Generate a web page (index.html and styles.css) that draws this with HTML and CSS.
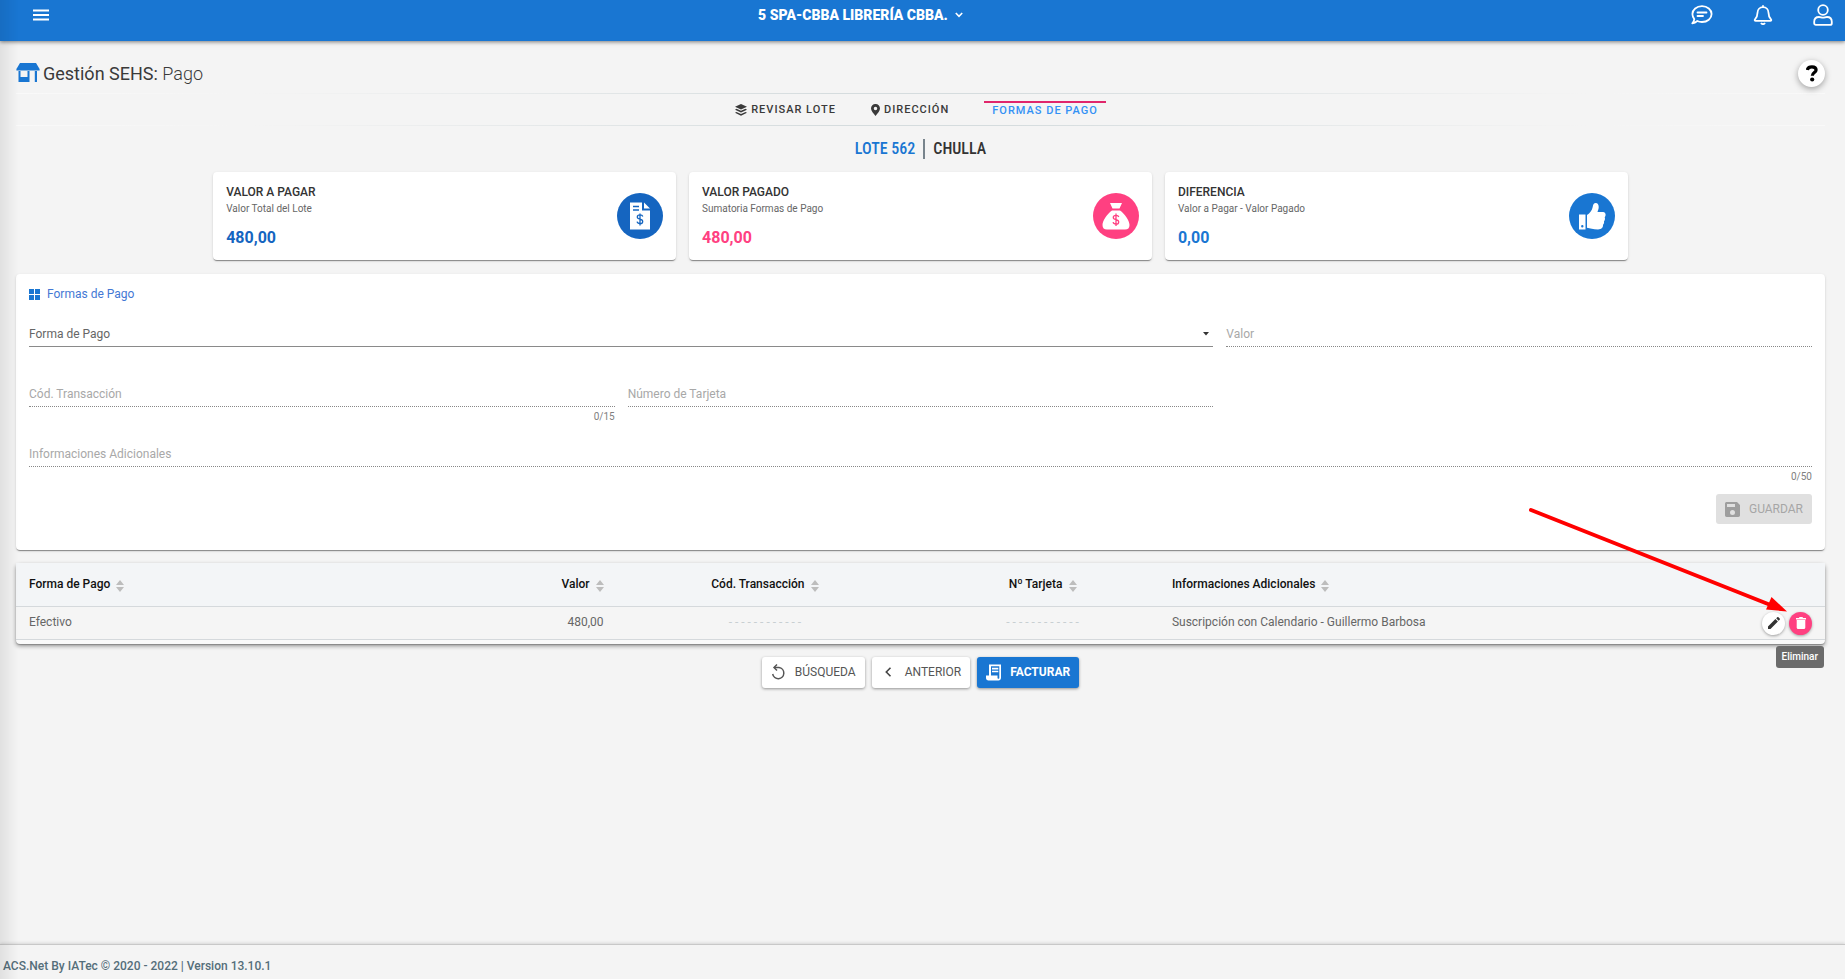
FILE: index.html
```html
<!DOCTYPE html>
<html lang="es">
<head>
<meta charset="utf-8">
<meta name="viewport" content="width=device-width, initial-scale=1">
<title>Gestión SEHS: Pago</title>
<link rel="stylesheet" href="styles.css">
</head>
<body>
<header class="topbar">
  <div class="topbar-side topbar-menu">
    <button class="icon-button" type="button" aria-label="Menú">
      <svg width="16" height="12" viewBox="0 0 16 12" fill="#fff"><path d="M0 .500h16v2H0zM0 5h16v2H0zM0 9.500h16v2H0z"/></svg>
    </button>
  </div>
  <button class="entity" type="button">5 SPA-CBBA LIBRERÍA CBBA.
    <svg width="8" height="6" viewBox="0 0 8 6" fill="none" stroke="#fff" stroke-width="1.600"><path d="M.8 1 4 4.400 7.200 1"/></svg>
  </button>
  <div class="topbar-side topbar-actions">
    <button class="icon-button" type="button" aria-label="Mensajes">
      <svg width="22" height="20" viewBox="0 0 22 20" fill="none" stroke="#fff" stroke-width="1.800" stroke-linecap="round" stroke-linejoin="round"><path d="M11 1.200c5.400 0 9.600 3.500 9.600 7.900S16.400 17 11 17c-1.700 0-3.300-.3-4.700-1-1.500 1.200-3.100 2-5 2.300 1.100-1.100 1.800-2.500 2-4.200C2 12.700 1.400 11 1.400 9.100c0-4.400 4.200-7.900 9.600-7.900z"/><path d="M6.500 7.500h9M6.500 11h5.500"/></svg>
    </button>
    <button class="icon-button" type="button" aria-label="Notificaciones">
      <svg width="20" height="20" viewBox="0 0 20 20" fill="none" stroke="#fff" stroke-width="1.800" stroke-linejoin="round"><path d="M10 .3v2M10 2.200c-3.300 0-5.500 2.400-5.500 5.600 0 3.600-1 5-2.500 6.500-.6.700-.3 1.500.7 1.500h14.600c1 0 1.300-.8.7-1.500-1.500-1.500-2.500-2.900-2.500-6.500 0-3.200-2.200-5.600-5.500-5.600z"/><path d="M8 18c.8 1.500 3.200 1.500 4 0"/></svg>
    </button>
    <button class="icon-button" type="button" aria-label="Usuario">
      <svg width="20" height="22" viewBox="0 0 20 22" fill="none" stroke="#fff" stroke-width="1.800"><circle cx="10" cy="6" r="4.800"/><path d="M6 13c1.500 0 2.500.7 4 .7s2.500-.7 4-.7c3 0 4.800 2 4.800 4.800v1.400c0 1-.7 1.700-1.700 1.700H2.900c-1 0-1.700-.7-1.700-1.700v-1.400C1.200 15 3 13 6 13z"/></svg>
    </button>
  </div>
</header>

<main class="page">
  <div class="page-head">
    <svg width="24" height="20" viewBox="0 0 24 20" fill="#1976d2"><path d="M4 0h16l3.600 6v1.600H.4V6z"/><path d="M2.500 8h2v6h7V8h2v11h-11zM18.800 8h2.200v11h-2.200z"/></svg>
    <h1 class="page-title">Gestión SEHS: <span class="page-sub">Pago</span></h1>
    <button class="help" type="button" aria-label="Ayuda">
      <svg width="12" height="17" viewBox="0 0 12 17" fill="none" stroke="#000" stroke-width="3.200"><path d="M1.300 5C1.700 2.700 3.500 1.800 5.900 1.800c2.600 0 4.200 1.200 4.200 3.100 0 2.700-3.800 2.600-3.800 5.900" stroke-linejoin="round"/><circle cx="6.200" cy="14.500" r="2.100" fill="#000" stroke="none"/></svg>
    </button>
  </div>
  <nav class="steps">
    <a class="step" href="#revisar">
      <svg width="12" height="12" viewBox="0 0 12 12" fill="#3a3a3a"><path d="M6 0 12 2.700 6 5.400 0 2.700zM1.500 4.800 6 6.800l4.500-2L12 5.700 6 8.400 0 5.700zM1.500 7.900 6 9.900l4.500-2 1.500.9-6 2.900-6-2.900z"/></svg>
      REVISAR LOTE</a>
    <a class="step" href="#direccion">
      <svg width="9" height="12" viewBox="0 0 9 12" fill="#3a3a3a" fill-rule="evenodd"><path d="M4.500 0A4.400 4.400 0 0 1 9 4.400C9 7 6.500 9 4.500 12 2.500 9 0 7 0 4.400A4.400 4.400 0 0 1 4.500 0zm0 2.700a1.700 1.700 0 1 0 0 3.500 1.700 1.700 0 0 0 0-3.500z"/></svg>
      DIRECCIÓN</a>
    <a class="step step-active" href="#pago" aria-current="step">FORMAS DE PAGO</a>
  </nav>
  <h2 class="lot"><span class="lot-number">LOTE 562</span><span class="lot-name">CHULLA</span></h2>

  <section class="cards">
    <article class="card">
      <div>
        <h3 class="card-title">VALOR A PAGAR</h3>
        <p class="card-note">Valor Total del Lote</p>
        <p class="card-value navy">480,00</p>
      </div>
      <svg class="badge" viewBox="0 0 46 46"><circle cx="23" cy="23" r="23" fill="#1565c0"/><path fill="#fff" d="M13 9.500h12v8h8v19H13z"/><path fill="#fff" d="M27 9.500l6 6h-6z"/><path d="M16 13.500h6M16 17h6" stroke="#1565c0" stroke-width="1.500"/><path d="M25.800 23.500c-.3-1-1.400-1.600-2.800-1.600-1.600 0-2.700.8-2.700 2.100 0 3 5.400 1.400 5.400 4.400 0 1.300-1.200 2.200-2.700 2.200s-2.700-.7-2.900-1.900M23 20.400v12" fill="none" stroke="#1565c0" stroke-width="1.300"/></svg>
    </article>
    <article class="card">
      <div>
        <h3 class="card-title">VALOR PAGADO</h3>
        <p class="card-note">Sumatoria Formas de Pago</p>
        <p class="card-value pink">480,00</p>
      </div>
      <svg class="badge" viewBox="0 0 46 46"><circle cx="23" cy="23" r="23" fill="#ff4081"/><path fill="#fff" d="M17 10h12l-2.500 5.500h-7zM19 17.500h8c4.500 3 9.500 10 9.500 14.500 0 3-1.500 4.500-4.500 4.500H14c-3 0-4.500-1.500-4.500-4.500 0-4.500 5-11.500 9.500-14.500z"/><path d="M25.800 24c-.3-1-1.400-1.600-2.800-1.600-1.600 0-2.700.8-2.700 2.100 0 3 5.400 1.400 5.400 4.400 0 1.300-1.200 2.200-2.700 2.200s-2.700-.7-2.900-1.900M23 20.500v12.500" fill="none" stroke="#ff4081" stroke-width="1.300"/></svg>
    </article>
    <article class="card">
      <div>
        <h3 class="card-title">DIFERENCIA</h3>
        <p class="card-note">Valor a Pagar - Valor Pagado</p>
        <p class="card-value blue">0,00</p>
      </div>
      <svg class="badge" viewBox="0 0 46 46"><circle cx="23" cy="23" r="23" fill="#1976d2"/><path fill="#fff" fill-rule="evenodd" d="M10 21.500h6.500v15H10zm3.300 10.600a1.200 1.200 0 1 0 0 2.400 1.200 1.200 0 0 0 0-2.400z"/><path fill="#fff" d="M18 22c3-2 5-4.500 5.700-8 .4-2.500 1.200-4 3-4 2.200 0 3 2 3 4 0 2-.8 3.500-1.200 5h5.500c1.800 0 2.800 1.500 2.600 3-.1 1-.4 1.600-.9 2.200.6 1.500.2 3-.7 4 .3 1.400-.1 2.700-1 3.600.2 2.700-1.500 4.700-5 4.700-5 0-8-1.500-11-1.800z"/></svg>
    </article>
  </section>

  <form class="panel">
    <h2 class="panel-title">
      <svg width="11" height="11" viewBox="0 0 11 11" fill="#1976d2"><path d="M0 0h5v5H0zM6 0h5v5H6zM0 6h5v5H0zM6 6h5v5H6z"/></svg>
      Formas de Pago</h2>
    <div class="fields">
      <div class="field span-2 enabled">
        <label for="forma">Forma de Pago</label>
        <select id="forma"><option value=""></option><option value="e">Efectivo</option></select>
        <svg class="caret" width="6" height="4" viewBox="0 0 6 4"><path d="M0 0h6L3 3.500z"/></svg>
      </div>
      <div class="field"><label for="valor">Valor</label><input id="valor" type="text" disabled></div>
      <div class="field"><label for="cod">Cód. Transacción</label><input id="cod" type="text" maxlength="15" disabled><span class="count">0/15</span></div>
      <div class="field"><label for="tarjeta">Número de Tarjeta</label><input id="tarjeta" type="text" disabled></div>
      <div class="field span-3"><label for="info">Informaciones Adicionales</label><input id="info" type="text" maxlength="50" disabled><span class="count">0/50</span></div>
    </div>
    <div class="panel-actions">
      <button class="btn btn-disabled" type="button" disabled>
        <svg width="15" height="15" viewBox="0 0 15 15" fill="#9e9e9e" fill-rule="evenodd"><path d="M1.700 0H12l3 3v10.300c0 1-.7 1.700-1.700 1.700H1.700C.7 15 0 14.300 0 13.300V1.700C0 .7.700 0 1.700 0zM2 2v3h8V2zm5.500 6a2.500 2.500 0 1 0 0 5 2.500 2.500 0 0 0 0-5z"/></svg>
        GUARDAR</button>
    </div>
  </form>

  <div class="table-box">
    <table class="payments">
      <colgroup><col class="c-form"><col class="c-value"><col class="c-code"><col class="c-card"><col class="c-info"><col class="c-act"></colgroup>
      <thead>
        <tr>
          <th scope="col">Forma de Pago<svg class="sort" viewBox="0 0 8 12"><path d="M4 0l4 5H0zM0 7h8l-4 5z"/></svg></th>
          <th scope="col" class="right">Valor<svg class="sort" viewBox="0 0 8 12"><path d="M4 0l4 5H0zM0 7h8l-4 5z"/></svg></th>
          <th scope="col" class="center">Cód. Transacción<svg class="sort" viewBox="0 0 8 12"><path d="M4 0l4 5H0zM0 7h8l-4 5z"/></svg></th>
          <th scope="col" class="center">Nº Tarjeta<svg class="sort" viewBox="0 0 8 12"><path d="M4 0l4 5H0zM0 7h8l-4 5z"/></svg></th>
          <th scope="col" class="flush">Informaciones Adicionales<svg class="sort" viewBox="0 0 8 12"><path d="M4 0l4 5H0zM0 7h8l-4 5z"/></svg></th>
          <th></th>
        </tr>
      </thead>
      <tbody>
        <tr>
          <td>Efectivo</td>
          <td class="right">480,00</td>
          <td class="center empty">- - - - - - - - - - - -</td>
          <td class="center empty">- - - - - - - - - - - -</td>
          <td class="flush">Suscripción con Calendario - Guillermo Barbosa</td>
          <td class="right">
            <div class="row-actions">
              <button class="round" type="button" aria-label="Editar"><svg width="12" height="12" viewBox="0 0 12 12" fill="#333"><path d="M0 12v-2.500L7.400 2.100l2.500 2.500L2.500 12zM8.200 1.300 9.300.3c.3-.3.800-.3 1.100 0l1.300 1.300c.3.300.3.800 0 1.100l-1.100 1.100z"/></svg></button>
              <button class="round round-pink" type="button" aria-describedby="tip" aria-label="Eliminar"><svg width="10" height="12" viewBox="0 0 10 12" fill="#fff"><path d="M0 1h2.800l.8-1h2.800l.8 1H10v1.500H0zM.7 3h8.600v7.500c0 .9-.6 1.500-1.500 1.500H2.200C1.300 12 .7 11.400.7 10.500z"/></svg></button>
              <span class="tooltip" id="tip" role="tooltip">Eliminar</span>
              <svg class="pointer" width="260" height="106" viewBox="0 0 260 106"><path d="M3 3 240 97" stroke="#f00" stroke-width="4" stroke-linecap="round"/><path d="M259 104.500 238 102.500 243.500 90z" fill="#f00"/></svg>
            </div>
          </td>
        </tr>
      </tbody>
    </table>
  </div>

  <div class="bottom-actions">
    <button class="btn" type="button">
      <svg width="15" height="16" viewBox="0 0 15 16" fill="none" stroke="#555" stroke-width="1.500"><path d="M3.200 3.500H8A5.600 5.600 0 1 1 1.700 10"/><path d="M6 .5 3 3.500l3 3"/></svg>
      BÚSQUEDA</button>
    <button class="btn" type="button">
      <svg width="15" height="10" viewBox="0 0 15 10" fill="none" stroke="#444" stroke-width="1.600"><path d="M9.500.8 5.300 5l4.200 4.200"/></svg>
      ANTERIOR</button>
    <button class="btn btn-primary" type="button">
      <svg width="15" height="17" viewBox="0 0 15 17" fill="#fff" fill-rule="evenodd"><path d="M3 .5h12v13.300c0 1.500-1 2.700-2.500 2.700h-10C1 16.500 0 15.500 0 14v-2.500h3zm2 1.800v9.200h6.500v2.300c0 1.300 1.800 1.300 1.800 0V2.300z"/><path d="M6 3.800h6.300v1.600H6zM6 6.700h6.300v1.600H6z"/></svg>
      FACTURAR</button>
  </div>
</main>
<footer class="footer">ACS.Net By IATec © 2020 - 2022 | Version 13.10.1</footer>
</body>
</html>
```
FILE: styles.css
```css
* { box-sizing: border-box; }
body {
  margin: 0;
  min-height: 100vh;
  display: flex;
  flex-direction: column;
  background: #f4f4f4;
  color: #333;
  font: 12px/16px Roboto, "Liberation Sans", sans-serif;
}
body::before {
  content: "";
  position: fixed;
  z-index: 5;
  top: 0;
  bottom: 0;
  left: 0;
  width: 18px;
  background: linear-gradient(90deg, rgba(0,0,0,.08), rgba(0,0,0,0));
  pointer-events: none;
}
h1, h2, h3, p { margin: 0; }
button { font-family: inherit; border: 0; cursor: pointer; }
svg { flex: none; }

.topbar {
  display: flex;
  align-items: flex-start;
  height: 41px;
  padding: 3px 12px 0 33px;
  background: #1976d2;
  box-shadow: 0 1px 4px rgba(0,0,0,.5);
}
.topbar-side { display: flex; align-items: center; height: 24px; }
.topbar-menu { flex: 5; }
.topbar-actions { flex: 6; justify-content: flex-end; gap: 40px; }
.icon-button { display: flex; padding: 0; background: none; }
.entity {
  display: flex;
  align-items: center;
  gap: 7px;
  height: 24px;
  padding: 0;
  background: none;
  color: #fff;
  font-size: 14px;
  font-weight: 900;
}

.page { flex: 1; padding: 0 20px 0 16px; }
.page-head { display: flex; align-items: center; gap: 3px; height: 52px; padding: 14px 0 2px; }
.page-title { flex: 1; padding-top: 2px; font-size: 18px; line-height: 24px; font-weight: 400; color: #3a3a3a; }
.page-sub { font-weight: 300; }
.help {
  display: flex;
  align-items: center;
  justify-content: center;
  width: 27px;
  height: 27px;
  padding: 0;
  border-radius: 50%;
  background: #fff;
  box-shadow: 0 2px 6px rgba(0,0,0,.35);
}

.steps {
  display: flex;
  justify-content: center;
  gap: 35px;
  height: 33px;
  border: solid transparent;
  border-width: 1px 0;
  border-image: linear-gradient(90deg, #f9f9f9, #f3f3f3 15%, #d5dcde 45%, #d5dcde 55%, #f3f3f3 85%, #f9f9f9) 1;
}
.step {
  display: flex;
  align-items: center;
  gap: 4px;
  color: #3a3a3a;
  font-size: 11px;
  font-weight: 500;
  letter-spacing: 1px;
  text-decoration: none;
}
.step-active {
  align-self: center;
  padding: 0 8px;
  border-top: 2px solid #e0266b;
  color: #3391f4;
}

.lot { display: flex; justify-content: center; padding: 13px 0 12px; font: 500 16px/20px "Roboto Condensed", Roboto, sans-serif; }
.lot-number { padding-right: 8px; border-right: 2px solid #78848c; color: #1976d2; }
.lot-name { padding-left: 8px; }

.cards {
  display: grid;
  grid-template-columns: repeat(3, 1fr);
  gap: 13px;
  width: 78.200%;
  margin: 1px auto 14px;
}
.card, .panel {
  border-radius: 4px;
  background: #fff;
  box-shadow: 0 2px 1px -1px rgba(0,0,0,.3), 0 1px 1px rgba(0,0,0,.14), 0 1px 3px rgba(0,0,0,.12);
}
.card { display: flex; align-items: center; justify-content: space-between; padding: 11px 13px 12px; }
.card-title { font-size: 12px; font-weight: 500; line-height: 18px; }
.card-note { font-size: 10px; color: #666; }
.card-value { padding-top: 11px; font-size: 16px; font-weight: 700; line-height: 20px; }
.navy { color: #1565c0; }
.pink { color: #ff4081; }
.blue { color: #1976d2; }
.badge { width: 46px; height: 46px; }

.panel { padding: 12px 13px 26px; }
.panel-title { display: flex; align-items: center; gap: 7px; font-size: 12px; font-weight: 400; color: #4478d4; }
.fields { display: grid; grid-template-columns: repeat(3, 1fr); gap: 0 13px; padding-top: 19px; }
.span-2 { grid-column: span 2; }
.span-3 { grid-column: span 3; }
.field { display: grid; grid-template: 26px 34px / 1fr auto; }
.field label { grid-area: 1 / 1 / 2 / 3; align-self: center; padding-bottom: 1px; color: #a8a8a8; }
.field input, .field select {
  grid-area: 1 / 1 / 2 / 3;
  width: 100%;
  padding: 0;
  border: 0;
  border-bottom: 1px dotted #888;
  border-radius: 0;
  background: transparent;
  font: inherit;
  appearance: none;
}
.field.enabled label { color: #666; }
.field.enabled select { border-bottom: 1px solid #8a8a8a; }
.caret { grid-area: 1 / 2; align-self: center; margin-right: 4px; fill: #333; }
.count { grid-area: 2 / 2; padding-top: 3px; font-size: 10px; line-height: 14px; color: #808080; }
.panel-actions { display: flex; justify-content: flex-end; margin-top: -7px; }

.btn {
  display: flex;
  align-items: center;
  gap: 9px;
  height: 31px;
  padding: 0 9px;
  border-radius: 3px;
  background: #fff;
  color: #555;
  font-size: 12px;
  box-shadow: 0 1px 3px rgba(0,0,0,.4);
}
.btn-primary { background: #1976d2; color: #fff; font-weight: 700; }
.btn-disabled { height: 30px; background: #e0e0e0; color: #a6a6a6; box-shadow: none; }

.table-box {
  margin-top: 13px;
  padding-bottom: 4px;
  border-radius: 4px;
  background: #fafafa;
  box-shadow: 0 2px 4px rgba(0,0,0,.4), 0 1px 1px rgba(0,0,0,.2);
}
.payments { width: 100%; table-layout: fixed; border-collapse: collapse; }
.c-form { width: 16.600%; }
.c-value { width: 16.600%; }
.c-code { width: 16.400%; }
.c-card { width: 14.300%; }
.c-act { width: 8%; }
.payments th, .payments td { padding: 0 13px; border-bottom: 1px solid #d5d9dc; text-align: left; }
.payments th { height: 43px; background: #f3f5f7; color: #111; font-weight: 500; }
.payments td { height: 33px; padding-bottom: 2px; background: #f5f5f5; color: #666; }
.payments .right { text-align: right; }
.payments .center { text-align: center; }
.payments .flush { padding-left: 0; }
.payments .empty { color: #c8cfd2; }
.sort { width: 8px; height: 12px; margin-left: 6px; vertical-align: -4px; fill: #bdbdbd; }
.row-actions { position: relative; display: flex; justify-content: flex-end; gap: 4px; padding-top: 3px; }
.round {
  display: flex;
  align-items: center;
  justify-content: center;
  width: 23px;
  height: 23px;
  padding: 0;
  border-radius: 50%;
  background: #fff;
  box-shadow: 0 1px 3px rgba(0,0,0,.35);
}
.round-pink { background: #ff4081; }
.tooltip {
  position: absolute;
  z-index: 2;
  top: 37px;
  right: -12px;
  padding: 3px 6px;
  border-radius: 3px;
  background: #6b6b6b;
  color: #fff;
  font-size: 10px;
  font-weight: 500;
}
.pointer { position: absolute; z-index: 3; right: 24px; bottom: 22px; pointer-events: none; }

.bottom-actions { display: flex; justify-content: center; gap: 7px; padding: 13px 0; }
.footer {
  padding: 12px 3px 4px;
  border-top: 1px solid #c8c8c8;
  box-shadow: 0 -1px 3px rgba(0,0,0,.12);
  color: #546e7a;
  font-weight: 500;
  line-height: 18px;
}
```
